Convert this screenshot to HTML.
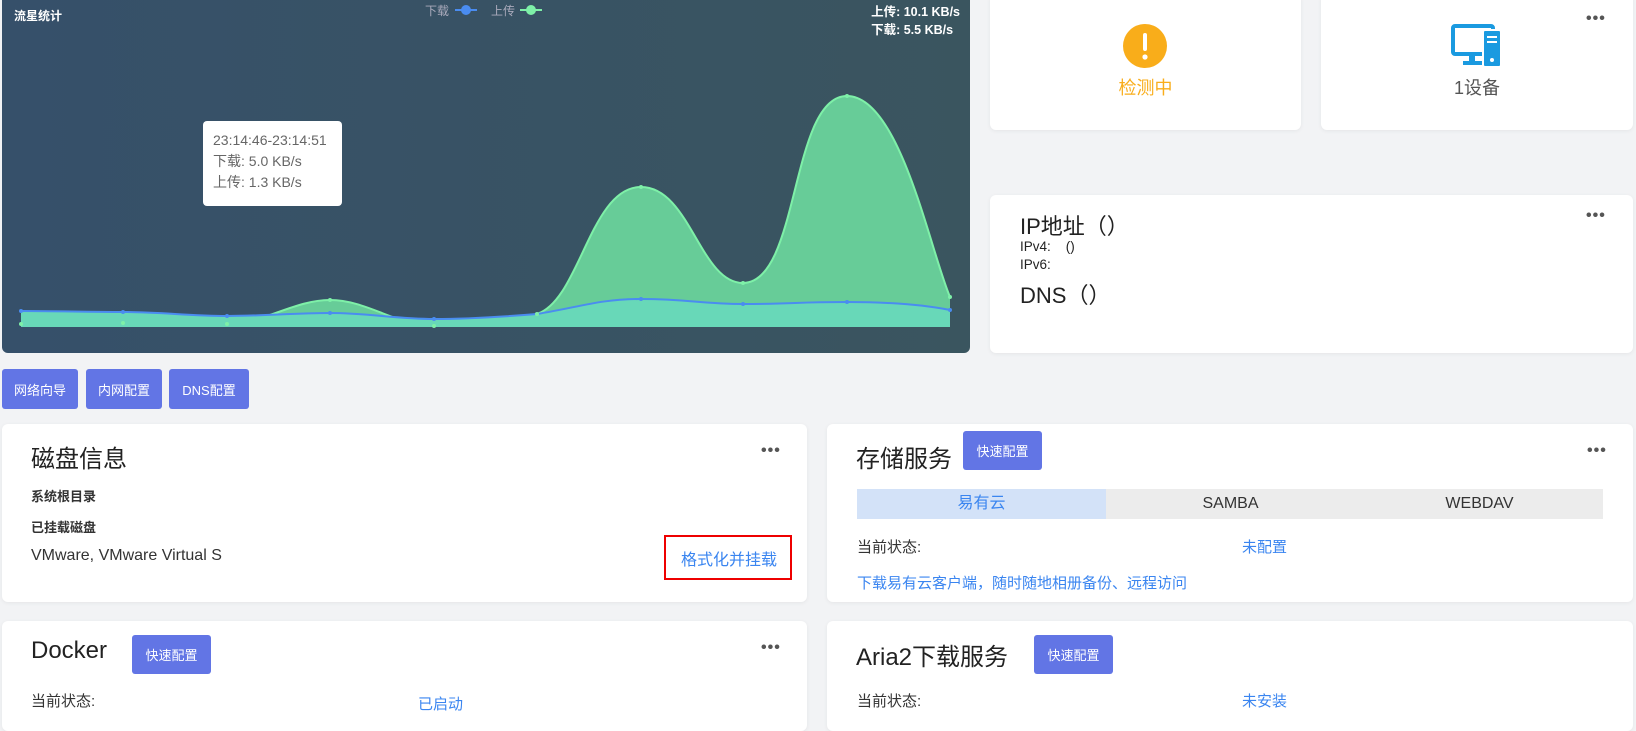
<!DOCTYPE html>
<html><head><meta charset="utf-8"><style>
*{box-sizing:border-box;margin:0;padding:0}
body{width:1636px;height:721px;overflow:hidden;background:#f2f3f5;font-family:"Liberation Sans","Noto Sans CJK SC",sans-serif;position:relative;color:#222}
.a{position:absolute}
.card{position:absolute;background:#fff;border-radius:6px;box-shadow:0 1px 4px rgba(0,0,0,.06)}
.btn{position:absolute;background:#6275e5;color:#fff;font-size:13px;border-radius:3px;display:flex;align-items:center;justify-content:center}
.dots{position:absolute;font-size:16px;color:#555;letter-spacing:1px;font-weight:bold;line-height:10px}
.blue{color:#3a85f0}
.t{position:absolute;white-space:nowrap}
</style></head><body>
<div class="a" style="left:2px;top:0;width:968px;height:353px;background:linear-gradient(90deg,#36506a,#3a555f);border-radius:0 0 6px 6px;overflow:hidden">
<svg width="968" height="353" style="position:absolute;left:-2px;top:0">
<path d="M21 324 C57 324 87 323 123 323 C160 323 190 324 227 324 C263 324 294 300 330 300 C367 300 397 326 434 326 C470 326 500 322 537 314 C580 300 590 187 641 187 C690 187 700 283 743 283 C800 283 790 96 847 96 C900 96 930 250 950 297 L950 327 L21 327Z" fill="#67cc98"/>
<path d="M21 324 C57 324 87 323 123 323 C160 323 190 324 227 324 C263 324 294 300 330 300 C367 300 397 326 434 326 C470 326 500 322 537 314 C580 300 590 187 641 187 C690 187 700 283 743 283 C800 283 790 96 847 96 C900 96 930 250 950 297" fill="none" stroke="#7ef0a8" stroke-width="2"/>
<path d="M21 311 C57 311 87 312 123 312 C160 312 190 316 227 316 C263 316 294 313 330 313 C367 313 397 319 434 319 C470 319 500 317 537 314 C580 307 600 299 641 299 C690 299 700 304 743 304 C800 304 790 302 847 302 C900 302 930 306 950 310 L950 327 L21 327Z" fill="#68d8b8"/>
<path d="M21 311 C57 311 87 312 123 312 C160 312 190 316 227 316 C263 316 294 313 330 313 C367 313 397 319 434 319 C470 319 500 317 537 314 C580 307 600 299 641 299 C690 299 700 304 743 304 C800 304 790 302 847 302 C900 302 930 306 950 310" fill="none" stroke="#4a8cf0" stroke-width="2"/>
<g fill="#7ef0a8"><circle cx="21" cy="324" r="2"/><circle cx="123" cy="323" r="2"/><circle cx="227" cy="324" r="2"/><circle cx="330" cy="300" r="2"/><circle cx="434" cy="326" r="2"/><circle cx="537" cy="314" r="2"/><circle cx="641" cy="187" r="2"/><circle cx="743" cy="283" r="2"/><circle cx="847" cy="96" r="2"/><circle cx="950" cy="297" r="2"/></g>
<g fill="#4a8cf0"><circle cx="21" cy="311" r="2"/><circle cx="123" cy="312" r="2"/><circle cx="227" cy="316" r="2"/><circle cx="330" cy="313" r="2"/><circle cx="434" cy="319" r="2"/><circle cx="641" cy="299" r="2"/><circle cx="743" cy="304" r="2"/><circle cx="847" cy="302" r="2"/><circle cx="950" cy="310" r="2"/></g>
<line x1="455" y1="10" x2="477" y2="10" stroke="#4a8cf0" stroke-width="2"/><circle cx="466" cy="10" r="5" fill="#4a8cf0"/>
<line x1="520" y1="10" x2="542" y2="10" stroke="#7ef0a8" stroke-width="2"/><circle cx="531" cy="10" r="5" fill="#7ef0a8"/>
</svg>
<div class="t" style="left:12px;top:7px;color:#fff;font-size:12px;font-weight:bold">流星统计</div>
<div class="t" style="left:423px;top:2px;color:#aab;font-size:12px">下载</div>
<div class="t" style="left:489px;top:2px;color:#aab;font-size:12px">上传</div>
<div class="t" style="right:10px;top:3px;color:#fff;font-size:12.5px;font-weight:bold;line-height:18px">上传: 10.1 KB/s<br>下载: 5.5 KB/s</div>
<div class="a" style="left:201px;top:121px;width:139px;height:85px;background:#fff;border-radius:4px;padding:9px 0 0 10px;font-size:14px;color:#666;line-height:21px">23:14:46-23:14:51<br>下载: 5.0 KB/s<br>上传: 1.3 KB/s</div>
</div>

<div class="card" style="left:990px;top:-6px;width:311px;height:136px">
<svg class="a" style="left:133px;top:30px" width="44" height="44"><circle cx="22" cy="22" r="22" fill="#f9ad1a"/><rect x="20" y="9" width="4" height="18" rx="2" fill="#fff"/><circle cx="22" cy="33" r="2.6" fill="#fff"/></svg>
<div class="t" style="left:0;width:311px;text-align:center;top:80px;font-size:18px;color:#f9ad1a">检测中</div>
</div>
<div class="card" style="left:1321px;top:-6px;width:312px;height:136px">
<svg class="a" style="left:130px;top:30px" width="52" height="44"><rect x="2" y="2" width="40" height="28" rx="2" fill="none" stroke="#1a9ae0" stroke-width="4"/><rect x="18" y="30" width="6" height="8" fill="#1a9ae0"/><rect x="12" y="37" width="20" height="4" fill="#1a9ae0"/><rect x="32" y="6" width="18" height="37" rx="2" fill="#1a9ae0" stroke="#fff" stroke-width="2"/><rect x="36" y="12" width="10" height="2" fill="#fff"/><rect x="36" y="17" width="10" height="2" fill="#fff"/><circle cx="41" cy="36" r="2" fill="#fff"/></svg>
<div class="t" style="left:0;width:312px;text-align:center;top:80px;font-size:18px;color:#555">1设备</div>
<div class="dots" style="left:265px;top:20px">•••</div>
</div>
<div class="card" style="left:990px;top:195px;width:643px;height:158px">
<div class="t" style="left:30px;top:14px;font-size:22px">IP地址（）</div>
<div class="t" style="left:30px;top:43px;font-size:13.5px;line-height:18px">IPv4:&nbsp;&nbsp;&nbsp;&nbsp;()<br>IPv6:</div>
<div class="t" style="left:30px;top:83px;font-size:22px">DNS（）</div>
<div class="dots" style="left:596px;top:16px">•••</div>
</div>

<div class="btn" style="left:2px;top:369px;width:76px;height:40px">网络向导</div>
<div class="btn" style="left:86px;top:369px;width:76px;height:40px">内网配置</div>
<div class="btn" style="left:169px;top:369px;width:80px;height:40px">DNS配置</div>

<div class="card" style="left:2px;top:424px;width:805px;height:178px">
<div class="t" style="left:29px;top:15px;font-size:24px">磁盘信息</div>
<div class="dots" style="left:759px;top:22px">•••</div>
<div class="t" style="left:29px;top:62px;font-size:13px;font-weight:bold;color:#333">系统根目录</div>
<div class="t" style="left:29px;top:93px;font-size:13px;font-weight:bold;color:#333">已挂载磁盘</div>
<div class="t" style="left:29px;top:123px;font-size:16px;color:#333">VMware, VMware Virtual S</div>
<div class="a" style="left:662px;top:111px;width:128px;height:45px;border:2px solid #e00"></div>
<div class="t blue" style="left:679px;top:122px;font-size:16px">格式化并挂载</div>
</div>
<div class="card" style="left:827px;top:424px;width:806px;height:178px">
<div class="t" style="left:29px;top:15px;font-size:24px">存储服务</div>
<div class="btn" style="left:136px;top:7px;width:79px;height:39px">快速配置</div>
<div class="dots" style="left:760px;top:22px">•••</div>
<div class="a" style="left:30px;top:65px;width:249px;height:30px;background:#d3e2f8;color:#3a85f0;font-size:16px;text-align:center;line-height:30px">易有云</div>
<div class="a" style="left:279px;top:65px;width:497px;height:30px;background:#ececec"></div>
<div class="t" style="left:279px;width:249px;text-align:center;top:65px;line-height:30px;font-size:16px;color:#333">SAMBA</div>
<div class="t" style="left:528px;width:249px;text-align:center;top:65px;line-height:30px;font-size:16px;color:#333">WEBDAV</div>
<div class="t" style="left:30px;top:112px;font-size:15px;color:#333">当前状态:</div>
<div class="t blue" style="left:415px;top:112px;font-size:15px">未配置</div>
<div class="t blue" style="left:30px;top:148px;font-size:15px">下载易有云客户端，随时随地相册备份、远程访问</div>
</div>

<div class="card" style="left:2px;top:621px;width:805px;height:110px">
<div class="t" style="left:29px;top:16px;font-size:24px">Docker</div>
<div class="btn" style="left:130px;top:14px;width:79px;height:39px">快速配置</div>
<div class="dots" style="left:759px;top:22px">•••</div>
<div class="t" style="left:29px;top:69px;font-size:15px;color:#333">当前状态:</div>
<div class="t blue" style="left:416px;top:72px;font-size:15px">已启动</div>
</div>
<div class="card" style="left:827px;top:621px;width:806px;height:110px">
<div class="t" style="left:29px;top:16px;font-size:24px">Aria2下载服务</div>
<div class="btn" style="left:207px;top:14px;width:79px;height:39px">快速配置</div>
<div class="t" style="left:30px;top:69px;font-size:15px;color:#333">当前状态:</div>
<div class="t blue" style="left:415px;top:69px;font-size:15px">未安装</div>
</div>
</body></html>
